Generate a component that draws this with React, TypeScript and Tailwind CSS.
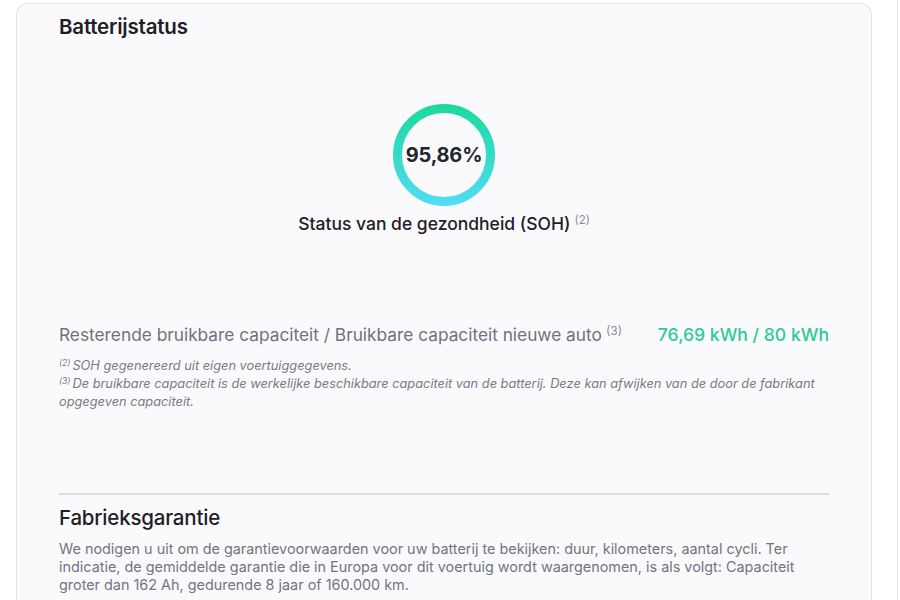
import React from 'react'

function SohRing({ label }: { label: string }) {
  return (
    <div className="relative h-[104px] w-[104px]">
      <svg viewBox="0 0 104 104" className="h-full w-full">
        <defs>
          <linearGradient id="soh-grad" gradientUnits="userSpaceOnUse" x1="52" x2="52" y1="0" y2="104">
            <stop offset="0%" stopColor="#1cd99c" />
            <stop offset="100%" stopColor="#52dcf6" />
          </linearGradient>
        </defs>
        <circle cx="52" cy="52" r="46.5" fill="none" stroke="url(#soh-grad)" strokeWidth="9" />
      </svg>
      <div className="absolute inset-0 flex items-center justify-center text-[20px] font-bold tracking-[-0.2px] text-[#24262d]">
        {label}
      </div>
    </div>
  )
}

export default function App() {
  return (
    <div className="min-h-[600px] bg-white pl-4 pr-7 pt-[3px] font-['Inter',sans-serif]">
      <div className="h-[620px] rounded-t-[12px] border border-b-0 border-[#e4e5ea] bg-[#fafafc] pl-[42px] pr-[42px]">
        <h2 className="pt-[10px] text-[20.5px] font-semibold leading-[26px] tracking-[-0.2px] text-[#1f2026]">Batterijstatus</h2>

        <div className="flex flex-col items-center pt-[63px]">
          <SohRing label="95,86%" />
          <p className="mt-[5px] text-[17.5px] font-medium leading-[24px] text-[#1f2026]">
            Status van de gezondheid (SOH)
            <sup className="ml-1 text-[11.5px] font-normal leading-none text-[#8a8d96]">(2)</sup>
          </p>
        </div>

        <div className="mt-[87px] flex items-baseline justify-between">
          <p className="text-[17.3px] leading-[24px] text-[#6f727c]">
            Resterende bruikbare capaciteit / Bruikbare capaciteit nieuwe auto
            <sup className="ml-1 text-[12px] leading-none text-[#8a8d96]">(3)</sup>
          </p>
          <p className="text-[17.6px] font-medium leading-[24px] text-[#2ccb99]">76,69 kWh / 80 kWh</p>
        </div>

        <div className="mt-[10px] text-[12.8px] italic leading-[18px] text-[#777a84]">
          <p>
            <sup className="mr-[2px] text-[8.5px] leading-none">(2)</sup>SOH gegenereerd uit eigen voertuiggegevens.
          </p>
          <p>
            <sup className="mr-[2px] text-[8.5px] leading-none">(3)</sup>De bruikbare capaciteit is de werkelijke beschikbare capaciteit van de batterij. Deze kan afwijken van de door de fabrikant opgegeven capaciteit.
          </p>
        </div>

        <div className="mt-[82px] h-[2px] bg-[#dcdde2]" />

        <h2 className="mt-[10px] text-[20.5px] font-medium leading-[26px] tracking-[-0.2px] text-[#1f2026]">Fabrieksgarantie</h2>
        <p className="mt-[9px] text-[14.4px] leading-[18px] text-[#72757f]">
          We nodigen u uit om de garantievoorwaarden voor uw batterij te bekijken: duur, kilometers, aantal cycli. Ter indicatie, de gemiddelde garantie die in Europa voor dit voertuig wordt waargenomen, is als volgt: Capaciteit groter dan 162 Ah, gedurende 8 jaar of 160.000 km.
        </p>
      </div>
      <div className="fixed right-[2px] top-0 h-[600px] w-px bg-[#e6e7eb]" />
    </div>
  )
}
